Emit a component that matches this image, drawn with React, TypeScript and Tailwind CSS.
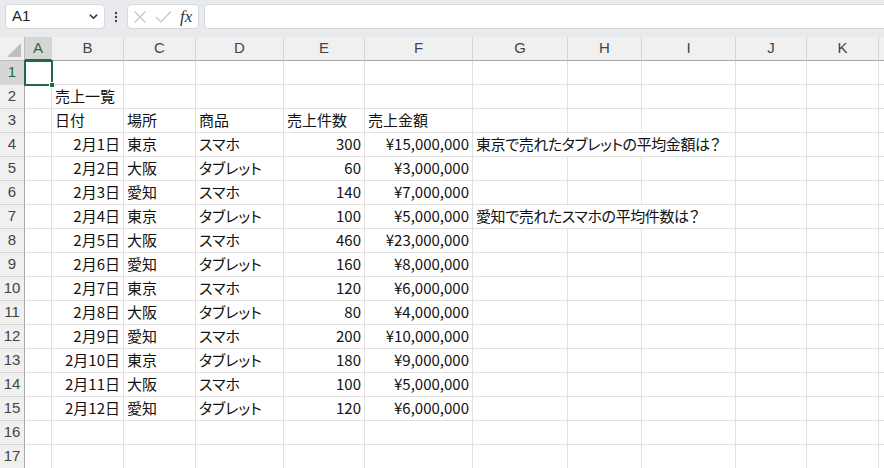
import React from "react";

type Row = { b?: string; c?: string; d?: string; e?: string; f?: string; g?: string };

const rows: Row[] = [
  {},
  { b: "売上一覧" },
  { b: "日付", c: "場所", d: "商品", e: "売上件数", f: "売上金額" },
  { b: "2月1日", c: "東京", d: "スマホ", e: "300", f: "¥15,000,000", g: "東京で売れたタブレットの平均金額は？" },
  { b: "2月2日", c: "大阪", d: "タブレット", e: "60", f: "¥3,000,000" },
  { b: "2月3日", c: "愛知", d: "スマホ", e: "140", f: "¥7,000,000" },
  { b: "2月4日", c: "東京", d: "タブレット", e: "100", f: "¥5,000,000", g: "愛知で売れたスマホの平均件数は？" },
  { b: "2月5日", c: "大阪", d: "スマホ", e: "460", f: "¥23,000,000" },
  { b: "2月6日", c: "愛知", d: "タブレット", e: "160", f: "¥8,000,000" },
  { b: "2月7日", c: "東京", d: "スマホ", e: "120", f: "¥6,000,000" },
  { b: "2月8日", c: "大阪", d: "タブレット", e: "80", f: "¥4,000,000" },
  { b: "2月9日", c: "愛知", d: "スマホ", e: "200", f: "¥10,000,000" },
  { b: "2月10日", c: "東京", d: "タブレット", e: "180", f: "¥9,000,000" },
  { b: "2月11日", c: "大阪", d: "スマホ", e: "100", f: "¥5,000,000" },
  { b: "2月12日", c: "愛知", d: "タブレット", e: "120", f: "¥6,000,000" },
  {},
  {},
];

const cols = ["A", "B", "C", "D", "E", "F", "G", "H", "I", "J", "K", ""];

const cellBase =
  "h-6 border-r border-b border-[#e1e1e1] flex items-center px-[3px] whitespace-nowrap overflow-hidden text-[15px] text-[#111] [font-feature-settings:'palt']";

function isNum(s?: string, col?: string) {
  if (!s) return false;
  if (col === "b") return /^\d/.test(s);
  if (col === "e" || col === "f") return /^[\d¥]/.test(s);
  return false;
}

function Cell({ v, col, span }: { v?: string; col: string; span?: boolean }) {
  const right = isNum(v, col);
  return (
    <div className={`${cellBase} ${right ? "justify-end" : "justify-start"} ${span ? "col-span-3 tracking-[-0.4px]" : ""}`}>
      {v ?? ""}
    </div>
  );
}

export default function App() {
  return (
    <div
      className="w-[884px] h-[468px] overflow-hidden bg-white relative"
      style={{ fontFamily: '"Noto Sans CJK JP", "Noto Sans", sans-serif' }}
    >
      {/* Formula bar */}
      <div className="h-[37px] bg-[#e8eaed] flex items-start pt-[4px] pl-[5px]">
        <div className="w-[100px] h-[25px] bg-white rounded-[4px] border border-[#d6d8db] flex items-center justify-between pl-[6px] pr-[5px]">
          <span className="text-[15px] text-[#222] [font-family:'Liberation_Sans',sans-serif]">A1</span>
          <svg width="11" height="11" viewBox="0 0 12 12">
            <path d="M2.5 4.5 L6 8 L9.5 4.5" stroke="#333" strokeWidth="1.6" fill="none" strokeLinecap="round" strokeLinejoin="round" />
          </svg>
        </div>
        <div className="w-[22px] h-[25px] flex items-center justify-center">
          <svg width="4" height="12" viewBox="0 0 4 12">
            <circle cx="2" cy="2" r="1.2" fill="#444" />
            <circle cx="2" cy="6" r="1.2" fill="#444" />
            <circle cx="2" cy="10" r="1.2" fill="#444" />
          </svg>
        </div>
        <div className="w-[72px] h-[25px] bg-white rounded-[4px] border border-[#d6d8db] flex items-center pl-[5px]">
          <svg width="14" height="14" viewBox="0 0 14 14">
            <path d="M1.5 1.5 L12.5 12.5 M12.5 1.5 L1.5 12.5" stroke="#c4c4c4" strokeWidth="1.2" />
          </svg>
          <svg width="17" height="14" viewBox="0 0 17 14" className="ml-[8px]">
            <path d="M1 7 L6 12 L16 1.5" stroke="#c4c4c4" strokeWidth="1.2" fill="none" />
          </svg>
          <span className="ml-[8px] italic text-[17px] leading-none text-[#333] [font-family:'Liberation_Serif',serif]">fx</span>
        </div>
        <div className="ml-[5px] flex-1 h-[25px] bg-white rounded-l-[4px] border border-r-0 border-[#d6d8db]" />
      </div>

      {/* Sheet */}
      <div className="grid grid-cols-[25px_27px_72px_72px_88px_81px_108px_95px_74px_94px_71px_72px_72px]">
        {/* corner */}
        <div className="h-6 bg-[#f0f0f0] border-r border-b border-[#bdbdbd] relative">
          <div className="absolute right-[3px] bottom-[3px] w-0 h-0 border-l-[14px] border-l-transparent border-b-[14px] border-b-[#bfbfbf]" />
        </div>
        {cols.map((c, idx) => (
          <div
            key={idx}
            className={`h-6 flex items-center justify-center text-[15px] border-r border-[#d4d4d4] [font-family:'Liberation_Sans',sans-serif] ${
              c === "A"
                ? "bg-[#d6d6d6] text-[#1e6b41] border-b-2 border-b-[#1e6b41]"
                : "bg-[#f0f0f0] text-[#444] border-b border-b-[#a8a8a8]"
            }`}
          >
            {c}
          </div>
        ))}

        {rows.map((r, i) => (
          <React.Fragment key={i}>
            <div
              className={`h-6 flex items-center justify-center text-[15px] border-b border-[#d4d4d4] border-r [font-family:'Liberation_Sans',sans-serif] ${
                i === 0 ? "bg-[#d6d6d6] text-[#1e6b41] border-r-[#1e6b41]" : "bg-[#f0f0f0] text-[#444] border-r-[#a8a8a8]"
              }`}
            >
              {i + 1}
            </div>
            <Cell col="a" />
            <Cell col="b" v={r.b} />
            <Cell col="c" v={r.c} />
            <Cell col="d" v={r.d} />
            <Cell col="e" v={r.e} />
            <Cell col="f" v={r.f} />
            {r.g ? (
              <Cell col="g" v={r.g} span />
            ) : (
              <>
                <Cell col="g" />
                <Cell col="h" />
                <Cell col="i" />
              </>
            )}
            <Cell col="j" />
            <Cell col="k" />
            <Cell col="l" />
          </React.Fragment>
        ))}
      </div>

      {/* Selection on A1 */}
      <div className="absolute left-[24px] top-[60px] w-[29px] h-[26px] border-2 border-[#1e6b41] pointer-events-none" />
      <div className="absolute left-[49px] top-[82px] w-[6px] h-[6px] bg-[#1e6b41] border border-white pointer-events-none" />
    </div>
  );
}
